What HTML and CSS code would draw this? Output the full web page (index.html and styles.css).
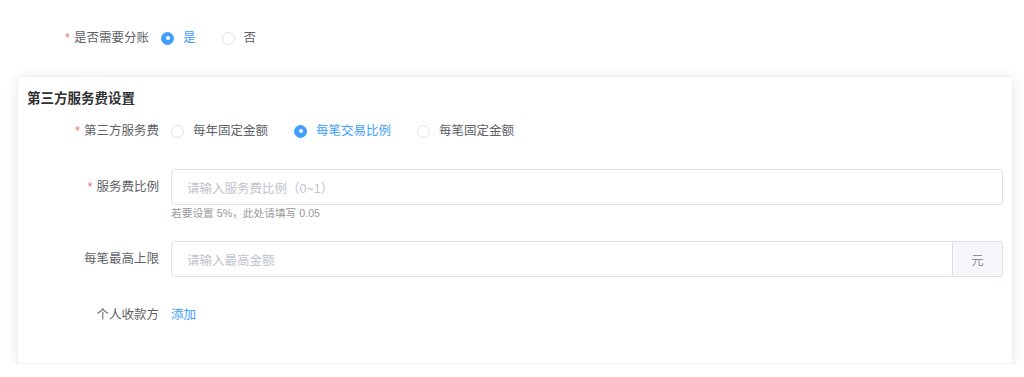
FILE: index.html
```html
<!DOCTYPE html>
<html lang="zh-CN">
<head>
<meta charset="utf-8">
<link rel="stylesheet" href="styles.css">
</head>
<body>
<div class="page">
  <div class="form-item top-item">
    <div class="label"><span class="req">*</span>是否需要分账</div>
    <div class="control">
      <label class="radio checked"><span class="dot"></span><span class="rtext">是</span></label>
      <label class="radio"><span class="dot"></span><span class="rtext">否</span></label>
    </div>
  </div>

  <div class="card">
    <div class="card-title">第三方服务费设置</div>

    <div class="form-item">
      <div class="label"><span class="req">*</span>第三方服务费</div>
      <div class="control">
        <label class="radio"><span class="dot"></span><span class="rtext">每年固定金额</span></label>
        <label class="radio checked"><span class="dot"></span><span class="rtext">每笔交易比例</span></label>
        <label class="radio"><span class="dot"></span><span class="rtext">每笔固定金额</span></label>
      </div>
    </div>

    <div class="form-item with-hint">
      <div class="label"><span class="req">*</span>服务费比例</div>
      <div class="control column">
        <div class="input"><span class="placeholder">请输入服务费比例（0~1）</span></div>
        <div class="hint">若要设置 5%，此处请填写 0.05</div>
      </div>
    </div>

    <div class="form-item">
      <div class="label">每笔最高上限</div>
      <div class="control">
        <div class="input-group">
          <div class="input grow"><span class="placeholder">请输入最高金额</span></div>
          <div class="append">元</div>
        </div>
      </div>
    </div>

    <div class="form-item last">
      <div class="label">个人收款方</div>
      <div class="control">
        <span class="link">添加</span>
      </div>
    </div>
  </div>
</div>
</body>
</html>
```

FILE: styles.css
```css
* { box-sizing: border-box; }
html, body { margin: 0; padding: 0; background: #fff; }
body {
  font-family: "Liberation Sans", "Noto Sans CJK SC", sans-serif;
  font-size: 12.5px;
  color: #606266;
}
.page {
  padding: 20px 11px 0 17px;
}
.form-item {
  display: flex;
  align-items: flex-start;
  margin-bottom: 20px;
}
.form-item.last { margin-bottom: 0; }
.top-item { margin-bottom: 20px; }
.label {
  width: 144px;
  flex: none;
  padding-right: 12px;
  text-align: right;
  line-height: 36px;
  height: 36px;
  color: #606266;
  white-space: nowrap;
}
.form-item.last .label { line-height: 37px; }
.req {
  color: #f56c6c;
  margin-right: 4px;
}
.control {
  flex: 1;
  display: flex;
  align-items: center;
  min-height: 36px;
}
.control.column {
  flex-direction: column;
  align-items: stretch;
}
.radio {
  display: inline-flex;
  align-items: center;
  margin-right: 26px;
  cursor: pointer;
  line-height: 36px;
}
.dot {
  width: 13px;
  height: 13px;
  border-radius: 50%;
  border: 1px solid #dcdfe6;
  background: #fff;
  position: relative;
  flex: none;
}
.radio.checked .dot {
  border-color: #409eff;
  background: #409eff;
}
.radio.checked .dot::after {
  content: "";
  position: absolute;
  left: 50%;
  top: 50%;
  width: 4px;
  height: 4px;
  margin: -2px 0 0 -2px;
  border-radius: 50%;
  background: #fff;
}
.rtext {
  padding-left: 9px;
  color: #606266;
}
.radio.checked .rtext { color: #409eff; }

.card {
  width: 996px;
  background: #fff;
  border: 1px solid #f0f0f7;
  box-shadow: 0 2px 12px 0 rgba(0, 0, 0, 0.09);
  padding: 11px 9px 29px 9px;
}
.card-title {
  font-size: 13.5px;
  font-weight: bold;
  color: #303133;
  line-height: 22px;
  height: 22px;
  margin-bottom: 3px;
}
.input {
  height: 36px;
  border: 1px solid #dcdfe6;
  border-radius: 4px;
  padding: 0 15px;
  display: flex;
  align-items: center;
  background: #fff;
}
.placeholder { color: #c0c4cc; }
.hint {
  font-size: 10.7px;
  line-height: 16px;
  height: 16px;
  color: #999;
}
.input-group {
  flex: 1;
  display: flex;
  height: 36px;
}
.input.grow {
  flex: 1;
  border-top-right-radius: 0;
  border-bottom-right-radius: 0;
}
.append {
  width: 50px;
  flex: none;
  border: 1px solid #dcdfe6;
  border-left: 0;
  border-radius: 0 4px 4px 0;
  background: #f5f7fa;
  color: #909399;
  display: flex;
  align-items: center;
  justify-content: center;
}
.link {
  color: #409eff;
  cursor: pointer;
  line-height: 37px;
}
```
